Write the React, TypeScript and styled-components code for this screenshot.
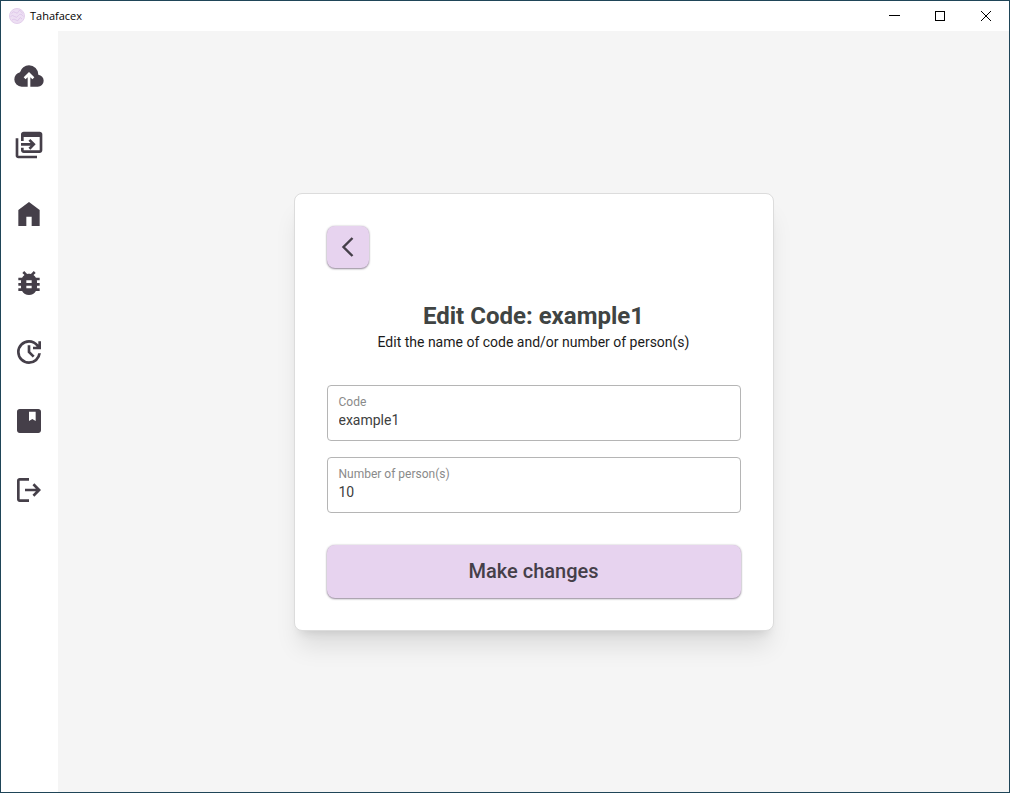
import React from "react";
import styled, { createGlobalStyle } from "styled-components";

const GlobalStyle = createGlobalStyle`
  *, *::before, *::after { box-sizing: border-box; }
  body {
    margin: 0;
    background: #f5f5f5;
    font-family: Roboto, "Liberation Sans", sans-serif;
    color: #1b1b1b;
  }
  button, input { font-family: inherit; }
`;

const AppWindow = styled.div`
  display: flex;
  flex-direction: column;
  min-height: 100vh;
  border: 1px solid #1f4558;
`;

const TitleBar = styled.header`
  display: flex;
  align-items: center;
  height: 30px;
  padding-left: 8px;
  background: #ffffff;
`;

const AppName = styled.span`
  flex: 1;
  margin-left: 5px;
  font-family: "Open Sans", "Noto Sans", sans-serif;
  font-size: 11px;
  line-height: 16px;
  color: #000000;
`;

const WindowControls = styled.div`
  display: flex;
  height: 100%;
`;

const WindowButton = styled.button`
  display: flex;
  align-items: center;
  justify-content: center;
  width: 46px;
  height: 100%;
  padding: 0;
  border: 0;
  background: transparent;
  color: #000000;
`;

const Body = styled.div`
  display: flex;
  flex: 1;
`;

const Sidebar = styled.nav`
  display: flex;
  flex-direction: column;
  gap: 37px;
  width: 57px;
  padding: 29px 12px 0;
  background: #ffffff;
`;

const NavButton = styled.button`
  display: flex;
  width: 32px;
  height: 32px;
  padding: 0;
  border: 0;
  background: transparent;
  color: #453f49;
  cursor: pointer;
`;

const Main = styled.main`
  display: flex;
  flex: 1;
  align-items: center;
  justify-content: center;
  background: #f5f5f5;
`;

const Card = styled.form`
  display: flex;
  flex-direction: column;
  gap: 32px;
  width: 100%;
  max-width: 480px;
  padding: 32px;
  border: 1px solid #dcdcdc;
  border-radius: 8px;
  background: #ffffff;
  box-shadow: 0 20px 25px -5px rgba(0, 0, 0, 0.1), 0 8px 10px -6px rgba(0, 0, 0, 0.1);
`;

const AccentButton = styled.button`
  display: flex;
  align-items: center;
  justify-content: center;
  padding: 0;
  border: 0;
  border-radius: 8px;
  background: #e7d3ef;
  color: #453f49;
  box-shadow: 0 0 2px rgba(60, 40, 70, 0.25), 0 1px 2px rgba(60, 40, 70, 0.5);
  cursor: pointer;
`;

const BackButton = styled(AccentButton)`
  width: 42px;
  height: 42px;
`;

const SubmitButton = styled(AccentButton)`
  height: 53px;
  font-size: 20px;
  font-weight: 500;
`;

const Heading = styled.div`
  text-align: center;
`;

const Title = styled.h1`
  margin: 0;
  font-size: 24px;
  line-height: 32px;
  font-weight: 700;
  color: #404443;
`;

const Subtitle = styled.p`
  margin: 0;
  font-size: 14px;
  line-height: 21px;
`;

const Fields = styled.div`
  display: flex;
  flex-direction: column;
  gap: 16px;
`;

const Field = styled.label`
  display: flex;
  flex-direction: column;
  height: 56px;
  padding: 7px 11px;
  border: 1px solid #b5b5b5;
  border-radius: 4px;
`;

const FieldLabel = styled.span`
  font-size: 12px;
  line-height: 18px;
  color: #8a8a8a;
`;

const FieldInput = styled.input`
  width: 100%;
  height: 18px;
  padding: 0;
  border: 0;
  outline: 0;
  background: transparent;
  font-size: 14px;
  color: #404040;
`;

const navItems = [
  {
    label: "Upload",
    path: "M11 20H6.5q-2.28 0-3.89-1.57Q1 16.85 1 14.58q0-1.95 1.17-3.48 1.18-1.53 3.08-1.95.63-2.3 2.5-3.72Q9.63 4 12 4q2.93 0 4.96 2.04Q19 8.07 19 11q1.73.2 2.86 1.5 1.14 1.28 1.14 3 0 1.88-1.31 3.19T18.5 20H13v-7.15l1.6 1.55L16 13l-4-4-4 4 1.4 1.4 1.6-1.55Z",
  },
  {
    label: "Import",
    path: "M4 22q-.83 0-1.41-.59Q2 20.83 2 20V7h2v13h14v2ZM8 18q-.83 0-1.41-.59Q6 16.83 6 16v-2h2v2h12V6H8v3H6V4q0-.83.59-1.41Q7.17 2 8 2h12q.83 0 1.41.59Q22 3.17 22 4v12q0 .83-.59 1.41Q20.83 18 20 18Zm5-2.500-1.400-1.400 1.600-1.600H6v-2h7.200l-1.600-1.600L13 7.500l4 4Z",
  },
  { label: "Home", path: "M4 21V9l8-6 8 6v12h-6v-7h-4v7Z" },
  {
    label: "Report a bug",
    path: "M20 8h-2.81c-.45-.78-1.07-1.45-1.82-1.96L17 4.41 15.59 3l-2.17 2.17C12.96 5.06 12.49 5 12 5s-.96.06-1.41.17L8.41 3 7 4.41l1.62 1.63C7.88 6.55 7.26 7.22 6.81 8H4v2h2.09c-.05.33-.09.66-.09 1v1H4v2h2v1c0 .34.04.67.09 1H4v2h2.81c1.04 1.79 2.97 3 5.19 3s4.15-1.21 5.19-3H20v-2h-2.09c.05-.33.09-.66.09-1v-1h2v-2h-2v-1c0-.34-.04-.67-.09-1H20V8zm-6 8h-4v-2h4v2zm0-4h-4v-2h4v2z",
  },
  {
    label: "Check for updates",
    path: "M12 21q-1.875 0-3.513-.713t-2.85-1.924t-1.925-2.85T3 12t.713-3.512t1.924-2.85t2.85-1.925T12 3q2.05 0 3.888.875T19 6.35V4h2v6h-6V8h2.75q-1.025-1.4-2.525-2.2T12 5Q9.075 5 7.038 7.038T5 12t2.038 4.963T12 19q2.625 0 4.588-1.7T18.9 13h2.05q-.375 3.425-2.937 5.713T12 21m2.8-4.8L11 12.4V7h2v4.6l3.2 3.2z",
  },
  {
    label: "Manual",
    path: "M5 21q-.825 0-1.412-.587T3 19V5q0-.825.588-1.412T5 3h14q.825 0 1.413.588T21 5v14q0 .825-.587 1.413T19 21ZM12 12l2.5-1.5L17 12V5h-5Z",
  },
  {
    label: "Log out",
    path: "M5 21q-.825 0-1.412-.587T3 19V5q0-.825.588-1.412T5 3h7v2H5v14h7v2Zm11-4-1.375-1.45 2.55-2.55H9v-2h8.175l-2.55-2.55L16 7l5 5Z",
  },
];

function Logo() {
  return (
    <svg width="16" height="16" viewBox="0 0 16 16" fill="none" aria-hidden="true">
      <circle cx="8" cy="8" r="7.500" fill="#eddff3" stroke="#e3cfec" />
      <path
        d="M2.500 5.500q2-3 4-1t3-1 4 2M1.500 8.500q2-2 4 0t4-1 5 1M3 12q2-2 4 0t3-1 3 0"
        stroke="#dcc3e8"
        strokeWidth=".8"
      />
    </svg>
  );
}

export default function App() {
  return (
    <>
      <GlobalStyle />
      <AppWindow>
        <TitleBar>
          <Logo />
          <AppName>Tahafacex</AppName>
          <WindowControls>
            <WindowButton type="button" aria-label="Minimize">
              <svg width="11" height="10" shapeRendering="crispEdges" aria-hidden="true">
                <path d="M0 4.500h11" stroke="currentColor" />
              </svg>
            </WindowButton>
            <WindowButton type="button" aria-label="Maximize">
              <svg width="10" height="10" shapeRendering="crispEdges" aria-hidden="true">
                <path d="M.5 .5h9v9h-9z" fill="none" stroke="currentColor" />
              </svg>
            </WindowButton>
            <WindowButton type="button" aria-label="Close">
              <svg width="10" height="10" aria-hidden="true">
                <path d="M0 0l10 10M10 0L0 10" stroke="currentColor" />
              </svg>
            </WindowButton>
          </WindowControls>
        </TitleBar>
        <Body>
          <Sidebar aria-label="Main">
            {navItems.map((item) => (
              <NavButton key={item.label} type="button" aria-label={item.label}>
                <svg width="32" height="32" viewBox="0 0 24 24" aria-hidden="true">
                  <path d={item.path} fill="currentColor" fillRule="evenodd" />
                </svg>
              </NavButton>
            ))}
          </Sidebar>
          <Main>
            <Card onSubmit={(event) => event.preventDefault()}>
              <BackButton type="button" aria-label="Back">
                <svg width="24" height="24" viewBox="0 0 24 24" fill="none" aria-hidden="true">
                  <path d="M16.500 3L7.500 12l9 9" stroke="currentColor" strokeWidth="2.400" />
                </svg>
              </BackButton>
              <Heading>
                <Title>Edit Code: example1</Title>
                <Subtitle>Edit the name of code and/or number of person(s)</Subtitle>
              </Heading>
              <Fields>
                <Field>
                  <FieldLabel>Code</FieldLabel>
                  <FieldInput type="text" name="code" defaultValue="example1" />
                </Field>
                <Field>
                  <FieldLabel>Number of person(s)</FieldLabel>
                  <FieldInput type="text" inputMode="numeric" name="persons" defaultValue="10" />
                </Field>
              </Fields>
              <SubmitButton type="submit">Make changes</SubmitButton>
            </Card>
          </Main>
        </Body>
      </AppWindow>
    </>
  );
}
